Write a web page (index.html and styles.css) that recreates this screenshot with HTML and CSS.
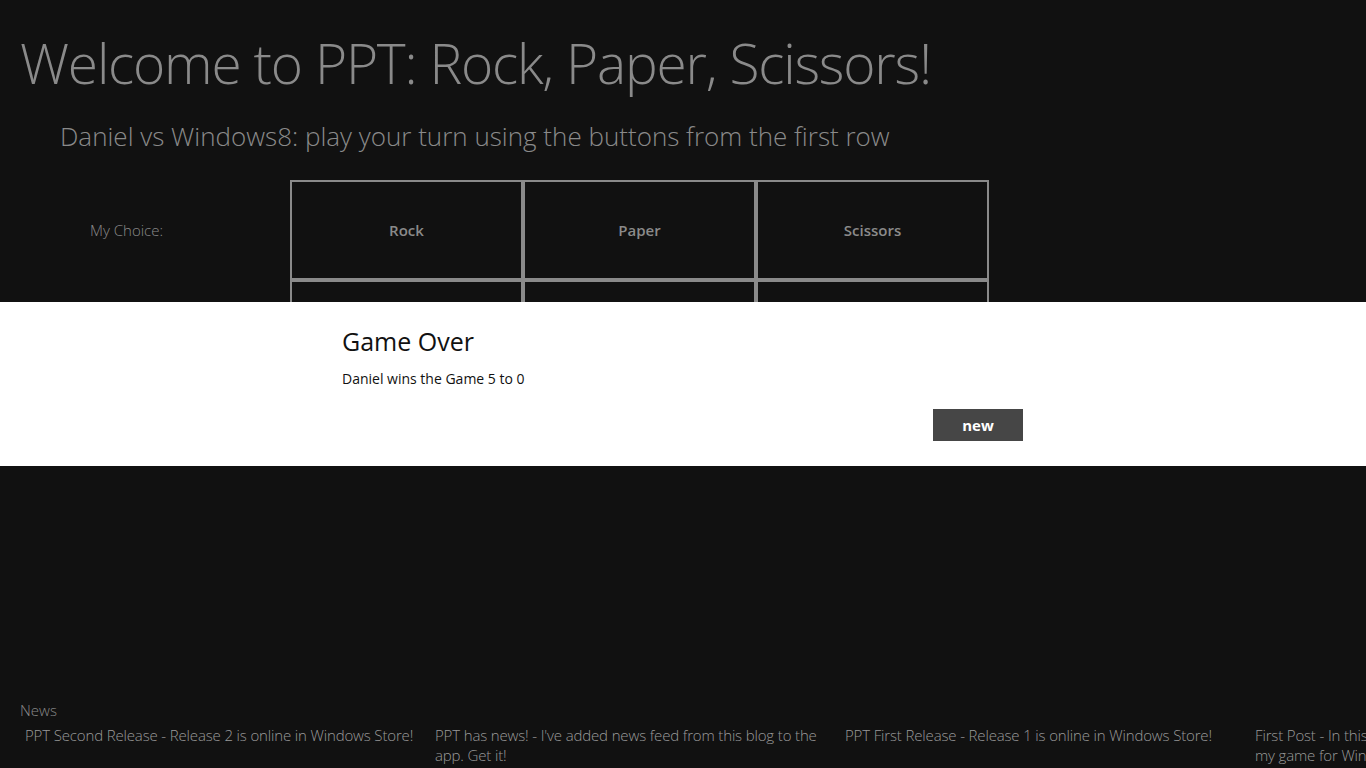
FILE: index.html
```html
<!DOCTYPE html>
<html>
<head>
<meta charset="utf-8">
<title>PPT: Rock, Paper, Scissors</title>
<link rel="stylesheet" href="styles.css">
</head>
<body>
<div class="page">
  <header class="header">
    <h1 class="title">Welcome to PPT: Rock, Paper, Scissors!</h1>
    <h2 class="subtitle">Daniel vs Windows8: play your turn using the buttons from the first row</h2>
  </header>
  <section class="board">
    <div class="row">
      <div class="label">My Choice:</div>
      <div class="cell">Rock</div>
      <div class="cell">Paper</div>
      <div class="cell">Scissors</div>
    </div>
    <div class="row">
      <div class="label"></div>
      <div class="cell"></div>
      <div class="cell"></div>
      <div class="cell"></div>
    </div>
  </section>
  <section class="news">
    <div class="news-title">News</div>
    <div class="news-items">
      <div class="news-item">PPT Second Release - Release 2 is online in Windows Store!</div>
      <div class="news-item">PPT has news! - I've added news feed from this blog to the app. Get it!</div>
      <div class="news-item">PPT First Release - Release 1 is online in Windows Store!</div>
      <div class="news-item">First Post - In this blog I will be posting all the news about my game for Windows 8</div>
    </div>
  </section>
</div>
<div class="dialog">
  <div class="dialog-content">
    <div class="dialog-title">Game Over</div>
    <div class="dialog-text">Daniel wins the Game 5 to 0</div>
    <div class="dialog-actions">
      <button class="btn">new</button>
    </div>
  </div>
</div>
</body>
</html>
```
FILE: styles.css
```css
html, body {
  margin: 0;
  padding: 0;
  background: #111111;
  width: 1366px;
  height: 768px;
  overflow: hidden;
}
body {
  font-family: "Open Sans", "Noto Sans", sans-serif;
  color: #8a8a8a;
  position: relative;
}
.page {
  display: flex;
  flex-direction: column;
  height: 768px;
  overflow: hidden;
}
.header {
  padding-top: 31px;
}
.title {
  margin: 0 0 0 20px;
  font-size: 55px;
  line-height: 64px;
  letter-spacing: -1.2px;
  font-weight: 300;
  color: #8a8a8a;
  white-space: nowrap;
}
.subtitle {
  margin: 23px 0 0 60px;
  font-size: 26px;
  line-height: 36px;
  font-weight: 300;
  color: #8a8a8a;
  white-space: nowrap;
}
.board {
  margin-top: 26px;
  display: flex;
  flex-direction: column;
}
.row {
  display: flex;
  height: 100px;
}
.label {
  width: 200px;
  padding-left: 90px;
  display: flex;
  align-items: center;
  font-size: 15px;
  font-weight: 300;
  color: #8a8a8a;
}
.cell {
  width: 229px;
  height: 96px;
  border: 2px solid #8a8a8a;
  display: flex;
  align-items: center;
  justify-content: center;
  font-size: 15px;
  font-weight: 600;
  color: #8a8a8a;
}
.news {
  margin-top: auto;
  padding: 0 0 3px 20px;
}
.news-title {
  font-size: 15px;
  line-height: 20px;
  color: #8a8a8a;
  font-weight: 300;
}
.news-items {
  display: flex;
  margin-top: 5px;
}
.news-item {
  box-sizing: border-box;
  flex: 0 0 400px;
  width: 400px;
  margin-right: 10px;
  padding-left: 5px;
  font-size: 15px;
  letter-spacing: -0.15px;
  line-height: 20px;
  height: 40px;
  color: #9a9a9a;
  font-weight: 300;
}
.dialog {
  position: absolute;
  top: 302px;
  left: 0;
  right: 0;
  height: 164px;
  background: #ffffff;
}
.dialog-content {
  margin-left: 342px;
  width: 681px;
  padding-top: 23px;
}
.dialog-title {
  font-size: 25px;
  line-height: 32px;
  color: #111111;
  font-weight: 400;
}
.dialog-text {
  margin-top: 12px;
  font-size: 14px;
  line-height: 20px;
  color: #111111;
}
.dialog-actions {
  display: flex;
  justify-content: flex-end;
  margin-top: 20px;
}
.btn {
  width: 90px;
  height: 32px;
  border: none;
  background: #464646;
  color: #ffffff;
  font-family: "Open Sans", "Noto Sans", sans-serif;
  font-size: 15px;
  font-weight: 700;
  padding: 0;
}
```
